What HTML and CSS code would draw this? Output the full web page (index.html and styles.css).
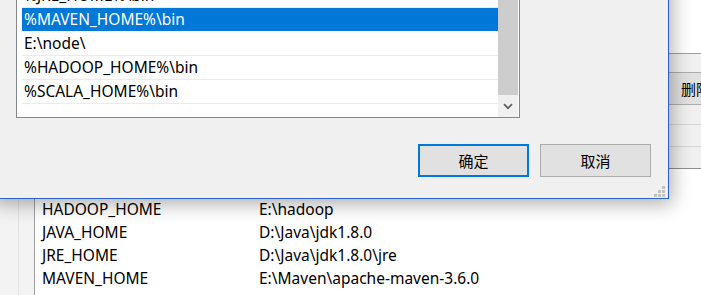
FILE: index.html
```html
<!doctype html>
<html>
<head>
    <meta charset="utf-8">
    <title>编辑环境变量</title>
    <link rel="stylesheet" href="styles.css">
</head>
<body>
    <div id="desk">
        <div id="env-window">
            <div class="top">
                <div class="fill"></div>
                <div class="side">
                    <div class="side-list"></div>
                    <div class="side-gap"></div>
                    <div class="side-btn">删除(D)</div>
                    <div class="side-row"></div>
                    <div class="side-row"></div>
                    <div class="side-row last"></div>
                </div>
            </div>
            <div class="var-list">
                <div class="gutter"><span></span></div>
                <ul class="var-rows">
                    <li><span class="key">HADOOP_HOME</span><span>E:\hadoop</span></li>
                    <li><span class="key">JAVA_HOME</span><span>D:\Java\jdk1.8.0</span></li>
                    <li><span class="key">JRE_HOME</span><span>D:\Java\jdk1.8.0\jre</span></li>
                    <li><span class="key">MAVEN_HOME</span><span>E:\Maven\apache-maven-3.6.0</span></li>
                </ul>
            </div>
        </div>

        <div id="path-dialog">
            <div class="path-box">
                <ul class="path-list">
                    <li>%JRE_HOME%\bin</li>
                    <li class="selected">%MAVEN_HOME%\bin</li>
                    <li>E:\node\</li>
                    <li>%HADOOP_HOME%\bin</li>
                    <li>%SCALA_HOME%\bin</li>
                </ul>
                <div class="scrollbar">
                    <div class="thumb"></div>
                    <div class="arrow">
                        <svg width="10" height="7" viewBox="0 0 10 7"><path d="M1 1.2 L5 5.2 L9 1.2" fill="none" stroke="#606060" stroke-width="1.8"/></svg>
                    </div>
                </div>
            </div>
            <div class="buttons">
                <button class="btn default">确定</button>
                <button class="btn">取消</button>
            </div>
            <svg class="grip" width="11" height="11" viewBox="0 0 11 11">
                <rect x="8" y="0" width="3" height="3"/>
                <rect x="4" y="4" width="3" height="3"/>
                <rect x="8" y="4" width="3" height="3"/>
                <rect x="0" y="8" width="3" height="3"/>
                <rect x="4" y="8" width="3" height="3"/>
                <rect x="8" y="8" width="3" height="3"/>
            </svg>
        </div>
    </div>
</body>
</html>
```

FILE: styles.css
```css
* { padding: 0; margin: 0; box-sizing: border-box; }
body {
    font-family: "Noto Sans", "Noto Sans CJK SC", sans-serif;
    font-size: 15.5px;
    color: #000;
    background: #fff;
    overflow: hidden;
}
#desk {
    position: relative;
    width: 701px;
    height: 295px;
    overflow: hidden;
}

/* window behind */
#env-window {
    display: flex;
    flex-direction: column;
    height: 100%;
    background: #fff;
}
#env-window .top {
    display: flex;
    height: 198px;
}
#env-window .fill { flex: 1; background: #f0f0f0; }
#env-window .side {
    width: 120px;
    display: flex;
    flex-direction: column;
}
.side-list {
    height: 54px;
    background: #fff;
    border-bottom: 1px solid #a0a0a0;
}
.side-gap { height: 18px; background: #f0f0f0; }
.side-btn {
    height: 33px;
    background: #e1e1e1;
    border-top: 1px solid #adadad;
    border-bottom: 1px solid #adadad;
    padding-left: 100px;
    line-height: 31px;
    font-family: "Noto Sans CJK SC", sans-serif;
    font-size: 15px;
    white-space: nowrap;
}
.side-row {
    height: 20px;
    background: #f0f0f0;
    border-bottom: 1px solid #d6d6d6;
}
.side-row + .side-row { height: 22px; }
.side-row.last { border-bottom-color: #8f8f8f; }

.var-list {
    flex: 1;
    display: flex;
}
.gutter {
    width: 35px;
    background: #f3f3f3;
    border-right: 1px solid #a0a0a0;
    padding-left: 18px;
}
.gutter span {
    display: block;
    height: 100%;
    border-left: 1px solid #e2e2e2;
}
.var-rows {
    list-style: none;
    flex: 1;
    padding-left: 7px;
}
.var-rows li {
    display: flex;
    height: 23px;
    line-height: 22px;
    white-space: nowrap;
}
.var-rows .key { width: 217px; }

/* path dialog */
#path-dialog {
    position: absolute;
    left: -9px;
    top: -30px;
    width: 678px;
    height: 229px;
    background: #f0f0f0;
    border: 1px solid #2a62c6;
    padding: 12px 17px 0 24px;
    box-shadow: 3px 5px 18px rgba(0, 0, 0, 0.32);
}
.path-box {
    display: flex;
    width: 504px;
    height: 135px;
    background: #fff;
    border: 1px solid #828790;
    padding: 0 1px 0 5px;
}
.path-list {
    list-style: none;
    flex: 1;
}
.path-list li {
    height: 24px;
    line-height: 23px;
    padding-left: 2px;
    border-bottom: 1px solid #ebebeb;
    white-space: nowrap;
}
.path-list li.selected {
    background: linear-gradient(#0078d7 23px, #fff 23px);
    color: #fff;
    border-bottom-color: #fff;
}
.scrollbar {
    width: 20px;
    display: flex;
    flex-direction: column;
    background: #f0f0f0;
}
.scrollbar .thumb { flex: 1; background: #cdcdcd; }
.scrollbar .arrow {
    height: 22px;
    display: flex;
    align-items: center;
    justify-content: center;
    padding-right: 1px;
}
.buttons {
    display: flex;
    justify-content: flex-end;
    gap: 11px;
    margin-top: 26px;
}
.btn {
    width: 111px;
    height: 33px;
    background: #e1e1e1;
    border: 1px solid #adadad;
    font-family: "Noto Sans CJK SC", sans-serif;
    font-size: 15px;
    color: #000;
}
.btn.default { border: 2px solid #0078d7; }
.grip {
    position: absolute;
    right: 3px;
    bottom: 1px;
    fill: #c2c2c2;
}
```
